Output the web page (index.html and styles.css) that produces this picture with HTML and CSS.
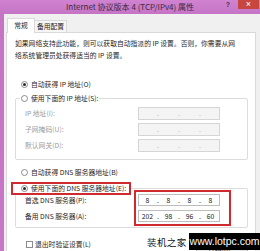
FILE: index.html
```html
<!DOCTYPE html>
<html lang="zh-CN">
<head>
<meta charset="utf-8">
<title>Internet 协议版本 4 (TCP/IPv4) 属性</title>
<link rel="stylesheet" href="styles.css">
</head>
<body>
<div class="window">
  <div class="titlebar">
    <span class="spacer"></span>
    <span class="title">Internet 协议版本 4 (TCP/IPv4) 属性</span>
    <span class="controls">
      <span class="help">?</span>
      <span class="close">×</span>
    </span>
  </div>
  <div class="frame">
    <div class="tabs">
      <span class="tab active">常规</span>
      <span class="tab other">备用配置</span>
    </div>
    <div class="panel">
      <p class="intro">如果网络支持此功能，则可以获取自动指派的 IP 设置。否则，你需要从网<br>络系统管理员处获得适当的 IP 设置。</p>
      <div class="radio-row first"><span class="radio on"></span><span>自动获得 IP 地址(O)</span></div>
      <fieldset class="group ip-group">
        <legend class="group-legend"><span class="radio-row inline"><span class="radio"></span><span>使用下面的 IP 地址(S):</span></span></legend>
        <div class="field-row"><span class="field-label">IP 地址(I):</span><span class="ipbox disabled"><span class="seg"></span><span class="dot">.</span><span class="seg"></span><span class="dot">.</span><span class="seg"></span><span class="dot">.</span><span class="seg"></span></span></div>
        <div class="field-row"><span class="field-label">子网掩码(U):</span><span class="ipbox disabled"><span class="seg"></span><span class="dot">.</span><span class="seg"></span><span class="dot">.</span><span class="seg"></span><span class="dot">.</span><span class="seg"></span></span></div>
        <div class="field-row"><span class="field-label">默认网关(D):</span><span class="ipbox disabled"><span class="seg"></span><span class="dot">.</span><span class="seg"></span><span class="dot">.</span><span class="seg"></span><span class="dot">.</span><span class="seg"></span></span></div>
      </fieldset>
      <div class="radio-row dns-auto"><span class="radio"></span><span>自动获得 DNS 服务器地址(B)</span></div>
      <fieldset class="group dns-group">
        <legend class="group-legend marked"><span class="radio-row inline"><span class="radio on"></span><span>使用下面的 DNS 服务器地址(E):</span></span></legend>
        <div class="dns-rows">
          <div class="dns-labels">
            <span class="dns-label">首选 DNS 服务器(P):</span>
            <span class="dns-label">备用 DNS 服务器(A):</span>
          </div>
          <div class="dns-inputs">
            <span class="ipbox"><span class="seg">8</span><span class="dot">.</span><span class="seg">8</span><span class="dot">.</span><span class="seg">8</span><span class="dot">.</span><span class="seg">8</span></span>
            <span class="ipbox"><span class="seg">202</span><span class="dot">.</span><span class="seg">98</span><span class="dot">.</span><span class="seg">96</span><span class="dot">.</span><span class="seg">60</span></span>
          </div>
        </div>
      </fieldset>
      <div class="bottom-row">
        <span class="check-row"><span class="checkbox"></span><span>退出时验证设置(L)</span></span>
        <span class="button">高级(V)...</span>
      </div>
    </div>
  </div>
  <div class="watermark">
    <span class="wm-cn">装机之家</span>
    <span class="wm-url">www.lotpc.com</span>
  </div>
</div>
</body>
</html>
```
FILE: styles.css
```css
* { box-sizing: border-box; }

body {
  margin: 0;
  width: 260px;
  height: 251px;
  overflow: hidden;
  background: #c977c9;
  font-family: "Noto Sans CJK SC", "Noto Sans", sans-serif;
  font-size: 6.8px;
  color: #1f1f1f;
}

.window {
  position: relative;
  width: 260px;
  height: 251px;
  overflow: hidden;
  background: linear-gradient(#d083d0, #c574c5 14px, #c876c8);
}

.titlebar {
  height: 14px;
  display: grid;
  grid-template-columns: 1fr auto 1fr;
}

.title {
  font-size: 8px;
  line-height: 14px;
  color: #3c2a3c;
  white-space: nowrap;
}

.controls {
  display: flex;
  justify-content: flex-end;
  align-items: flex-start;
}

.help {
  width: 20px;
  text-align: center;
  font-family: "Liberation Sans", sans-serif;
  font-size: 7px;
  font-weight: bold;
  line-height: 9px;
  color: #4b2d4b;
}

.close {
  width: 21px;
  height: 9px;
  margin-right: 1px;
  background: #c7463e;
  color: #fff;
  font-family: "Liberation Sans", sans-serif;
  font-size: 9px;
  line-height: 9px;
  text-align: center;
}

.frame {
  margin-left: 4px;
  height: 237px;
  background: #f0f0f0;
  padding: 4px 0 0 2px;
}

.tabs {
  display: flex;
  align-items: flex-end;
  height: 14px;
  padding-left: 1px;
}

.tab {
  border: 1px solid #d9d9d9;
  border-bottom: none;
  text-align: center;
  white-space: nowrap;
}

.tab.active {
  width: 28px;
  height: 15px;
  line-height: 13px;
  margin-bottom: -1px;
  background: #fff;
  position: relative;
  z-index: 1;
}

.tab.other {
  width: 32px;
  height: 12px;
  line-height: 11px;
  border-left: none;
  background: #f6f6f6;
}

.panel {
  width: 250px;
  height: 222px;
  background: #fff;
  border: 1px solid #d9d9d9;
  padding: 4px 7px 0 8px;
}

.intro {
  margin: 0;
  line-height: 12px;
  white-space: nowrap;
}

.radio-row {
  display: flex;
  align-items: center;
  gap: 3px;
  line-height: 12px;
  padding-left: 6px;
  white-space: nowrap;
}

.radio-row.first { margin-top: 17px; }
.radio-row.inline { padding-left: 0; }
.radio-row.dns-auto { margin-top: 6px; }

.radio {
  flex: none;
  width: 7px;
  height: 7px;
  border: 1px solid #8c8c8c;
  border-radius: 50%;
  background: #fff;
  display: flex;
  align-items: center;
  justify-content: center;
}

.radio.on::after {
  content: "";
  width: 3px;
  height: 3px;
  border-radius: 50%;
  background: #2a2a2a;
}

.group {
  margin: 2px 0 0;
  min-width: 0;
  border: 1px solid #dcdcdc;
  border-radius: 2px;
  padding: 1px 0 6px 9px;
}

.group-legend {
  padding: 0 1px;
  margin-left: -5px;
}

.group-legend.marked {
  margin-left: -14px;
  padding: 0 3px 0 8px;
  border: 2px solid #cf2b2e;
  line-height: 9px;
}

.group-legend.marked .radio-row { line-height: 9px; }

.dns-group {
  margin-top: 4px;
  padding: 0 0 1px 9px;
}

.field-row {
  display: flex;
  align-items: center;
  height: 16px;
}

.field-label {
  width: 113px;
  color: #9c9c9c;
}

.ipbox {
  width: 82px;
  height: 13px;
  display: flex;
  align-items: center;
  border: 1px solid #d5d5d5;
  background: #f4f4f4;
  color: #a8a8a8;
  line-height: 11px;
}

.ipbox .seg {
  flex: 1;
  text-align: center;
}

.ipbox .dot {
  width: 4px;
  text-align: center;
}

.dns-rows {
  display: flex;
  margin-top: -5px;
}

.dns-labels {
  width: 109px;
  padding-top: 4px;
  display: flex;
  flex-direction: column;
  gap: 4px;
}

.dns-label {
  height: 12px;
  line-height: 12px;
  white-space: nowrap;
}

.dns-inputs {
  width: 97px;
  border: 2px solid #cf2b2e;
  padding: 2px 9px 2px 2px;
  display: flex;
  flex-direction: column;
  gap: 4px;
}

.dns-inputs .ipbox {
  height: 12px;
  background: #fff;
  border-color: #bdbdbd;
  color: #222;
}

.bottom-row {
  display: flex;
  justify-content: space-between;
  align-items: flex-start;
  margin-top: 10px;
}

.check-row {
  display: flex;
  align-items: center;
  gap: 2px;
  line-height: 12px;
  padding-left: 11px;
  white-space: nowrap;
}

.checkbox {
  width: 7px;
  height: 7px;
  border: 1px solid #8c8c8c;
  background: #fff;
}

.button {
  width: 52px;
  height: 16px;
  margin-top: 5px;
  border: 1px solid #adadad;
  background: #e6e6e6;
  text-align: center;
  line-height: 14px;
  white-space: nowrap;
}

.watermark {
  position: absolute;
  left: 147px;
  top: 233px;
  display: flex;
  align-items: center;
  white-space: nowrap;
}

.wm-cn {
  font-size: 9.5px;
  letter-spacing: 0.4px;
  color: #111;
  line-height: 16px;
}

.wm-url {
  width: 72px;
  height: 17px;
  margin-left: 2px;
  background: #000;
  color: #fff;
  font-family: "Liberation Sans", sans-serif;
  font-size: 10.5px;
  line-height: 17px;
  text-align: center;
}
```
